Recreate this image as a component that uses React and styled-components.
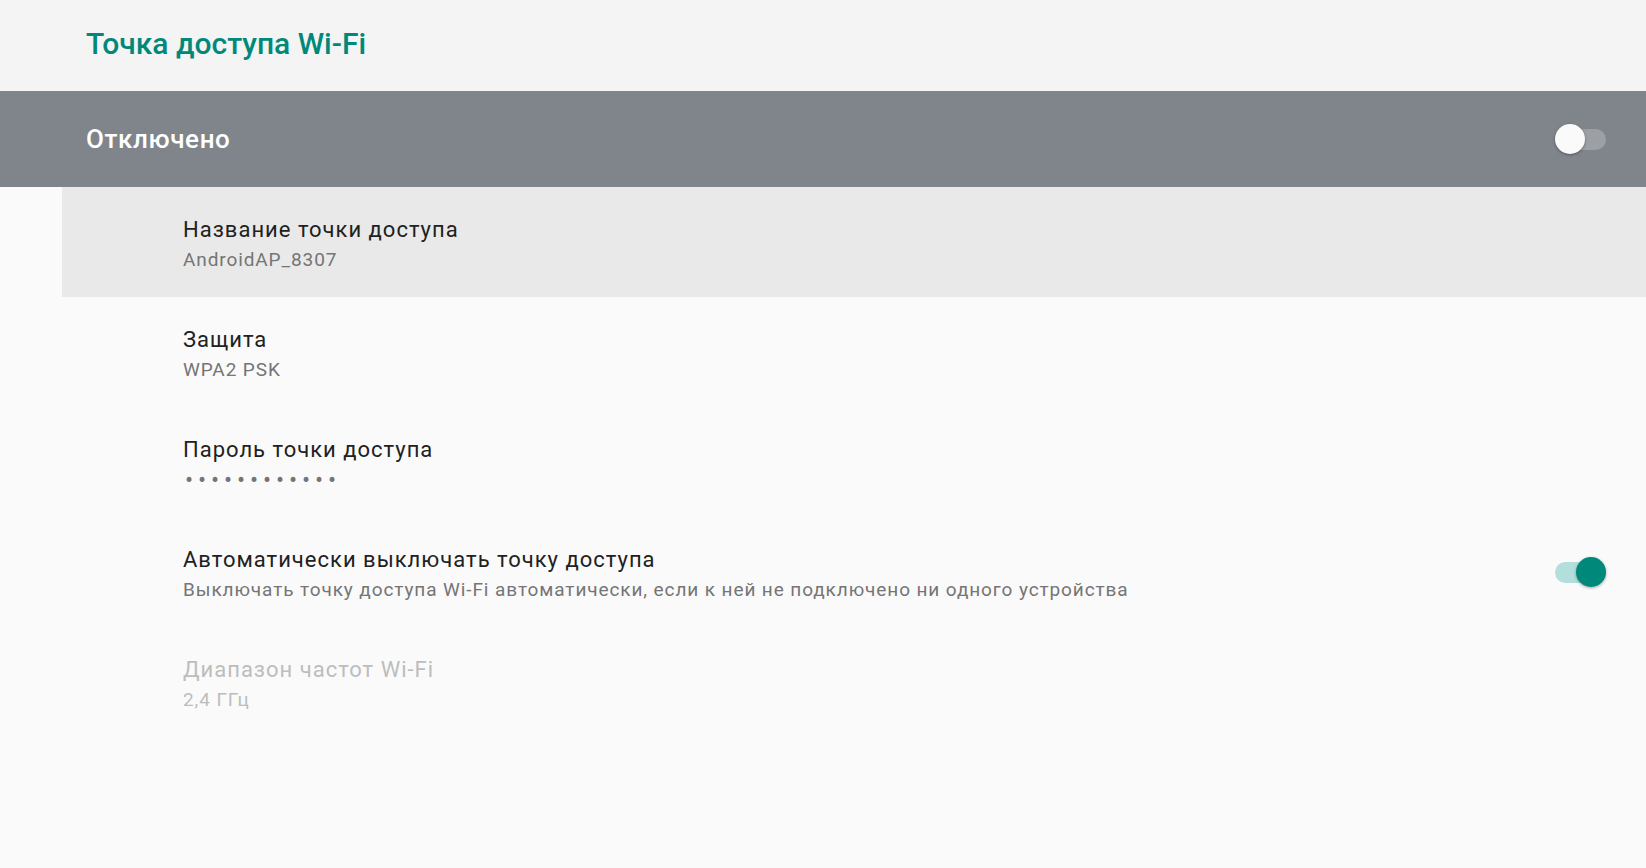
import React from 'react'
import styled, { createGlobalStyle } from 'styled-components'

const GlobalStyle = createGlobalStyle`
  html, body {
    margin: 0;
    padding: 0;
    background: #fafafa;
    font-family: Roboto, 'Noto Sans', sans-serif;
  }
`

const Page = styled.div`
  width: 1646px;
  height: 868px;
  background: #fafafa;
  display: flex;
  flex-direction: column;
  overflow: hidden;
`

const Toolbar = styled.header`
  height: 91px;
  background: #f4f4f4;
  display: flex;
  align-items: center;
  padding: 0 0 4px 86px;
  box-sizing: border-box;
`

const Title = styled.h1`
  margin: 0;
  font-size: 30px;
  font-weight: 500;
  color: #00897b;
`

const SwitchBar = styled.div`
  height: 96px;
  background: #80858c;
  display: flex;
  align-items: center;
  justify-content: space-between;
  padding: 0 40px 0 86px;
  box-sizing: border-box;
`

const SwitchLabel = styled.span`
  font-size: 26px;
  font-weight: 500;
  letter-spacing: 0.6px;
  color: #ffffff;
`

const List = styled.div`
  display: flex;
  flex-direction: column;
`

const Row = styled.div`
  height: 110px;
  margin-left: 62px;
  padding: 0 40px 0 121px;
  box-sizing: border-box;
  display: flex;
  align-items: center;
  justify-content: space-between;
  background: ${p => (p.$active ? '#e9e9e9' : 'transparent')};
`

const Texts = styled.div`
  display: flex;
  flex-direction: column;
  gap: 2px;
  margin-top: 4px;
`

const RowTitle = styled.span`
  font-size: 22px;
  line-height: 30px;
  letter-spacing: 1px;
  color: ${p => (p.$disabled ? '#bdbdbd' : '#212121')};
`

const Summary = styled.span`
  font-size: 19px;
  line-height: 26px;
  letter-spacing: 0.9px;
  color: ${p => (p.$disabled ? '#bdbdbd' : '#757575')};
`

const Dots = styled(Summary)`
  font-size: 24px;
  letter-spacing: 4.9px;
  padding-left: 2px;
`

const Track = styled.div`
  position: relative;
  width: 51px;
  height: 21px;
  border-radius: 11px;
  background: ${p => (p.$on ? '#b2dfdb' : '#9ca0a5')};
`

const Thumb = styled.div`
  position: absolute;
  top: -5px;
  left: ${p => (p.$on ? '21px' : '0')};
  width: 30px;
  height: 30px;
  border-radius: 50%;
  background: ${p => (p.$on ? '#00897b' : '#fafafa')};
  box-shadow: 0 1px 3px rgba(0, 0, 0, 0.35);
`

const Toggle = ({ on }) => (
  <Track $on={on}>
    <Thumb $on={on} />
  </Track>
)

const prefs = [
  { title: 'Название точки доступа', summary: 'AndroidAP_8307', active: true },
  { title: 'Защита', summary: 'WPA2 PSK' },
  { title: 'Пароль точки доступа', password: true },
  {
    title: 'Автоматически выключать точку доступа',
    summary: 'Выключать точку доступа Wi-Fi автоматически, если к ней не подключено ни одного устройства',
    toggle: true,
  },
  { title: 'Диапазон частот Wi-Fi', summary: '2,4 ГГц', disabled: true },
]

export default function App() {
  return (
    <Page>
      <GlobalStyle />
      <Toolbar>
        <Title>Точка доступа Wi-Fi</Title>
      </Toolbar>
      <SwitchBar>
        <SwitchLabel>Отключено</SwitchLabel>
        <Toggle on={false} />
      </SwitchBar>
      <List>
        {prefs.map((p, i) => (
          <Row key={`p${i}`} $active={p.active}>
            <Texts>
              <RowTitle $disabled={p.disabled}>{p.title}</RowTitle>
              {p.password ? (
                <Dots>{'•'.repeat(12)}</Dots>
              ) : (
                <Summary $disabled={p.disabled}>{p.summary}</Summary>
              )}
            </Texts>
            {p.toggle && <Toggle on />}
          </Row>
        ))}
      </List>
    </Page>
  )
}
